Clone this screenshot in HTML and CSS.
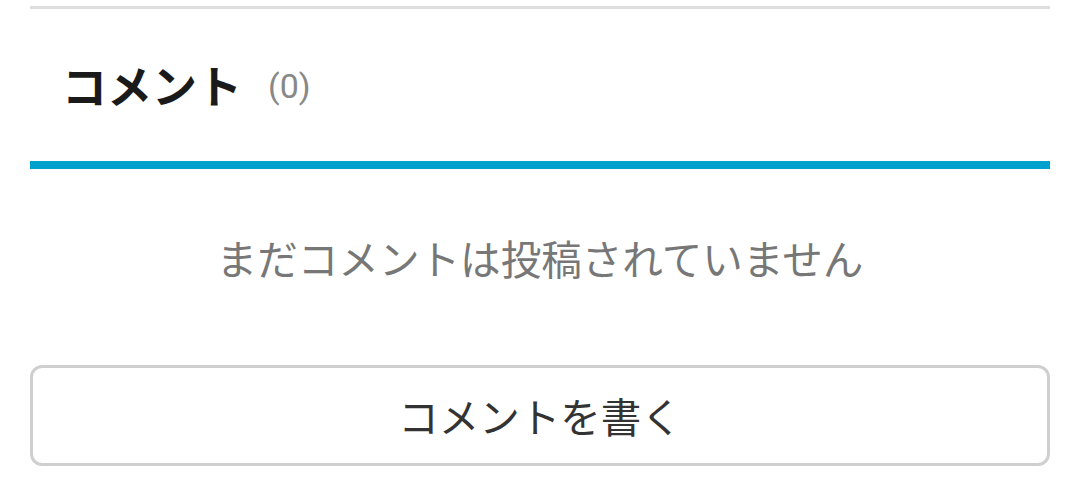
FILE: index.html
```html
<!DOCTYPE html>
<html lang="ja">
<head>
  <meta charset="UTF-8" />
  <title>コメント</title>
  <link rel="stylesheet" href="styles.css">
</head>
<body>
  <section class="comments">
    <div class="comments-head">
      <h2 class="comments-title">コメント</h2>
      <span class="comments-count">(0)</span>
    </div>
    <p class="comments-empty">まだコメントは投稿されていません</p>
    <button class="comments-btn">コメントを書く</button>
  </section>
</body>
</html>
```

FILE: styles.css
```css
* { box-sizing: border-box; }
body {
  margin: 0;
  background: #fff;
  font-family: "Noto Sans CJK JP", "Noto Sans", sans-serif;
}

.comments {
  margin: 6px 30px 0;
  border-top: 3px solid #dedede;
}

.comments-head {
  height: 160px;
  display: flex;
  align-items: center;
  padding-left: 32px;
  border-bottom: 8px solid #00a0cc;
}

.comments-title {
  margin: 0;
  font-size: 45px;
  font-weight: 700;
  color: #1a1a1a;
  line-height: 60px;
}

.comments-count {
  margin-left: 26px;
  font-family: Roboto, "Noto Sans", sans-serif;
  font-size: 34px;
  color: #888;
  line-height: 60px;
  padding-top: 2px;
}

.comments-empty {
  margin: 59px 0 0;
  text-align: center;
  font-size: 40.6px;
  line-height: 60px;
  color: #777;
}

.comments-btn {
  display: block;
  width: 100%;
  height: 101px;
  margin-top: 77px;
  background: #fff;
  border: 3px solid #cfcfcf;
  border-radius: 12px;
  font-family: inherit;
  font-size: 40.5px;
  color: #333;
  cursor: pointer;
}
```
